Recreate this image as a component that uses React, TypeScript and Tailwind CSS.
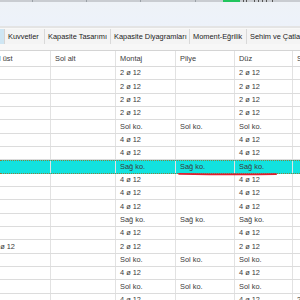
type Row = { cells: string[]; first?: string; last?: string; active?: boolean };

const twoRows = (text: string, pilye = ''): Row => ({ cells: [text, pilye, text] });

const rows: Row[] = [
  twoRows('2 ø 12'),
  twoRows('2 ø 12'),
  twoRows('2 ø 12'),
  twoRows('2 ø 12'),
  twoRows('Sol ko.', 'Sol ko.'),
  twoRows('4 ø 12'),
  twoRows('4 ø 12'),
  { cells: ['Sağ ko.', 'Sağ ko.', 'Sağ ko.'], active: true },
  twoRows('4 ø 12'),
  twoRows('4 ø 12'),
  twoRows('4 ø 12'),
  twoRows('Sağ ko.', 'Sağ ko.'),
  twoRows('4 ø 12'),
  { cells: ['2 ø 12', '', '2 ø 12'], first: '2 ø 12' },
  twoRows('Sol ko.', 'Sol ko.'),
  twoRows('4 ø 12'),
  twoRows('Sol ko.', 'Sol ko.'),
  { cells: ['4 ø 12', '', '4 ø 12'], last: '2 ø 12' },
];

const tabs = [
  { label: 'Kuvvetler', w: 'w-[40px]' },
  { label: 'Kapasite Tasarımı', w: 'w-[66px]' },
  { label: 'Kapasite Diyagramları', w: 'w-[79px]' },
  { label: 'Moment-Eğrilik', w: 'w-[57px]' },
  { label: 'Sehim ve Çatlak', w: 'w-[70px]' },
];

export default function App() {
  return (
    <div className="relative w-[300px] h-[300px] overflow-hidden bg-white text-[7.4px] leading-none text-[#3a3a3a] [font-family:'Liberation_Sans',Arial,sans-serif]">
      {/* strip from the window above */}
      <div className="h-[2px] flex bg-[#c9ccd1]">
        <div className="w-[32px]" />
        <div className="w-px bg-[#9aa0a6]" />
        <div className="w-[53px]" />
        <div className="w-px bg-[#9aa0a6]" />
        <div className="w-[53px]" />
        <div className="w-px bg-[#9aa0a6]" />
        <div className="w-[54px]" />
        <div className="w-px bg-[#9aa0a6]" />
        <div className="w-[27px]" />
        <div className="w-[17px] bg-[#22c55e]" />
        <div className="w-[3px]" />
        <div className="w-px bg-[#555]" />
        <div className="w-[2px]" />
        <div className="w-px bg-[#555]" />
        <div className="w-[7px]" />
        <div className="w-px bg-[#555]" />
        <div className="w-[3px]" />
        <div className="w-px bg-[#555]" />
        <div className="w-[3px]" />
        <div className="w-px bg-[#555]" />
        <div className="w-[3px]" />
        <div className="w-px bg-[#555]" />
        <div className="w-[5px]" />
        <div className="w-px bg-[#555]" />
      </div>

      {/* upper pane */}
      <div className="h-[24px] bg-gradient-to-b from-[#eef2f7] to-[#edf2fa]" />
      <div className="h-[2px] bg-[#e4e4e4]" />

      {/* tab strip */}
      <div className="h-[16px] flex bg-[#eeeeee] border-t border-[#f8f8f8]">
        <div className="w-[5px] shrink-0 bg-[#cfe6f3] border-r border-[#d6d6d6]" />
        {tabs.map((t) => (
          <div
            key={t.label}
            className={`${t.w} shrink-0 flex items-center pl-[3px] bg-[#f4f4f4] border-r border-[#d9d9d9] whitespace-nowrap overflow-hidden text-[#222]`}
          >
            {t.label}
          </div>
        ))}
      </div>
      <div className="h-[6px] bg-[#f7f7f7]" />

      {/* grid */}
      <div className="border-t border-[#d4d4d4]">
        <div className="h-[16px] flex items-center border-b border-[#dadada]">
          <Cell w="w-[51px]" shift="-ml-[14px]">Sol üst</Cell>
          <Cell w="w-[65px]">Sol alt</Cell>
          <Cell w="w-[60px]">Montaj</Cell>
          <Cell w="w-[59px]">Pilye</Cell>
          <Cell w="w-[58px]">Düz</Cell>
          <Cell w="flex-1" last>Sol üst</Cell>
        </div>

        {rows.map((r, i) => (
          <div
            key={i}
            className={`h-[13.33px] flex items-center ${
              r.active
                ? 'bg-[#12e2df] border-y border-dotted border-[#8a7d3c]'
                : 'border-b border-[#dcdcdc]'
            }`}
          >
            <Cell w="w-[51px]" shift="-ml-[10px]">{r.first ?? ''}</Cell>
            <Cell w="w-[65px]">{''}</Cell>
            <Cell w="w-[60px]">{r.cells[0]}</Cell>
            <Cell w="w-[59px]">{r.cells[1]}</Cell>
            <Cell w="w-[58px]">{r.cells[2]}</Cell>
            <Cell w="flex-1" last>{r.last ?? ''}</Cell>
          </div>
        ))}
      </div>

      {/* red ink mark under the selected row */}
      <svg className="absolute left-[178px] top-[172px]" width="100" height="4" viewBox="0 0 100 4">
        <path d="M1 1.8 Q50 2.8 98 2.2" stroke="#e11d2e" strokeWidth="1.8" fill="none" strokeLinecap="round" />
      </svg>
    </div>
  );
}

function Cell({
  w,
  children,
  shift = '',
  last = false,
}: {
  w: string;
  children: string;
  shift?: string;
  last?: boolean;
}) {
  return (
    <div
      className={`${w} shrink-0 h-full flex items-center overflow-hidden whitespace-nowrap ${
        last ? 'pl-[4px]' : 'pl-[4px] border-r border-[#e2e2e2]'
      }`}
    >
      <span className={shift}>{children}</span>
    </div>
  );
}
